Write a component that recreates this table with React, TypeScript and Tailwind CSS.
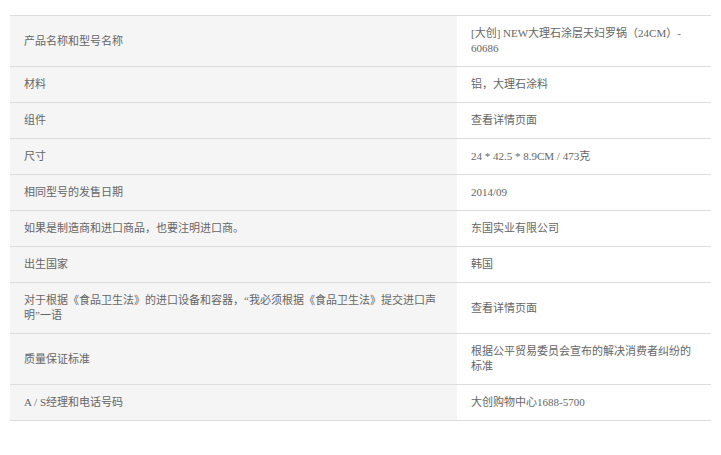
const rows: { label: string; value: string }[] = [
  { label: "产品名称和型号名称", value: "[大创] NEW大理石涂层天妇罗锅（24CM）- 60686" },
  { label: "材料", value: "铝，大理石涂料" },
  { label: "组件", value: "查看详情页面" },
  { label: "尺寸", value: "24 * 42.5 * 8.9CM / 473克" },
  { label: "相同型号的发售日期", value: "2014/09" },
  { label: "如果是制造商和进口商品，也要注明进口商。", value: "东国实业有限公司" },
  { label: "出生国家", value: "韩国" },
  {
    label: "对于根据《食品卫生法》的进口设备和容器，“我必须根据《食品卫生法》提交进口声明”一语",
    value: "查看详情页面",
  },
  { label: "质量保证标准", value: "根据公平贸易委员会宣布的解决消费者纠纷的标准" },
  { label: "A / S经理和电话号码", value: "大创购物中心1688-5700" },
];

const SpecRow = ({ label, value }: { label: string; value: string }) => (
  <div className="flex border-b border-[#dddddd]">
    <div className="w-[447px] shrink-0 bg-[#f5f5f5] px-[14px] py-[10px] flex items-center">
      <p>{label}</p>
    </div>
    <div className="flex-1 px-[14px] py-[10px] flex items-center">
      <p>{value}</p>
    </div>
  </div>
);

export default function App() {
  return (
    <div className="w-[721px] h-[455px] bg-white pt-[15px] px-[10px]">
      <div
        className="w-[701px] border-t border-[#dddddd] text-[11px] leading-[15px] text-[#666666]"
        style={{ fontFamily: '"Liberation Serif", "Noto Sans CJK SC", serif' }}
      >
        {rows.map((row) => (
          <SpecRow key={row.label} label={row.label} value={row.value} />
        ))}
      </div>
    </div>
  );
}
